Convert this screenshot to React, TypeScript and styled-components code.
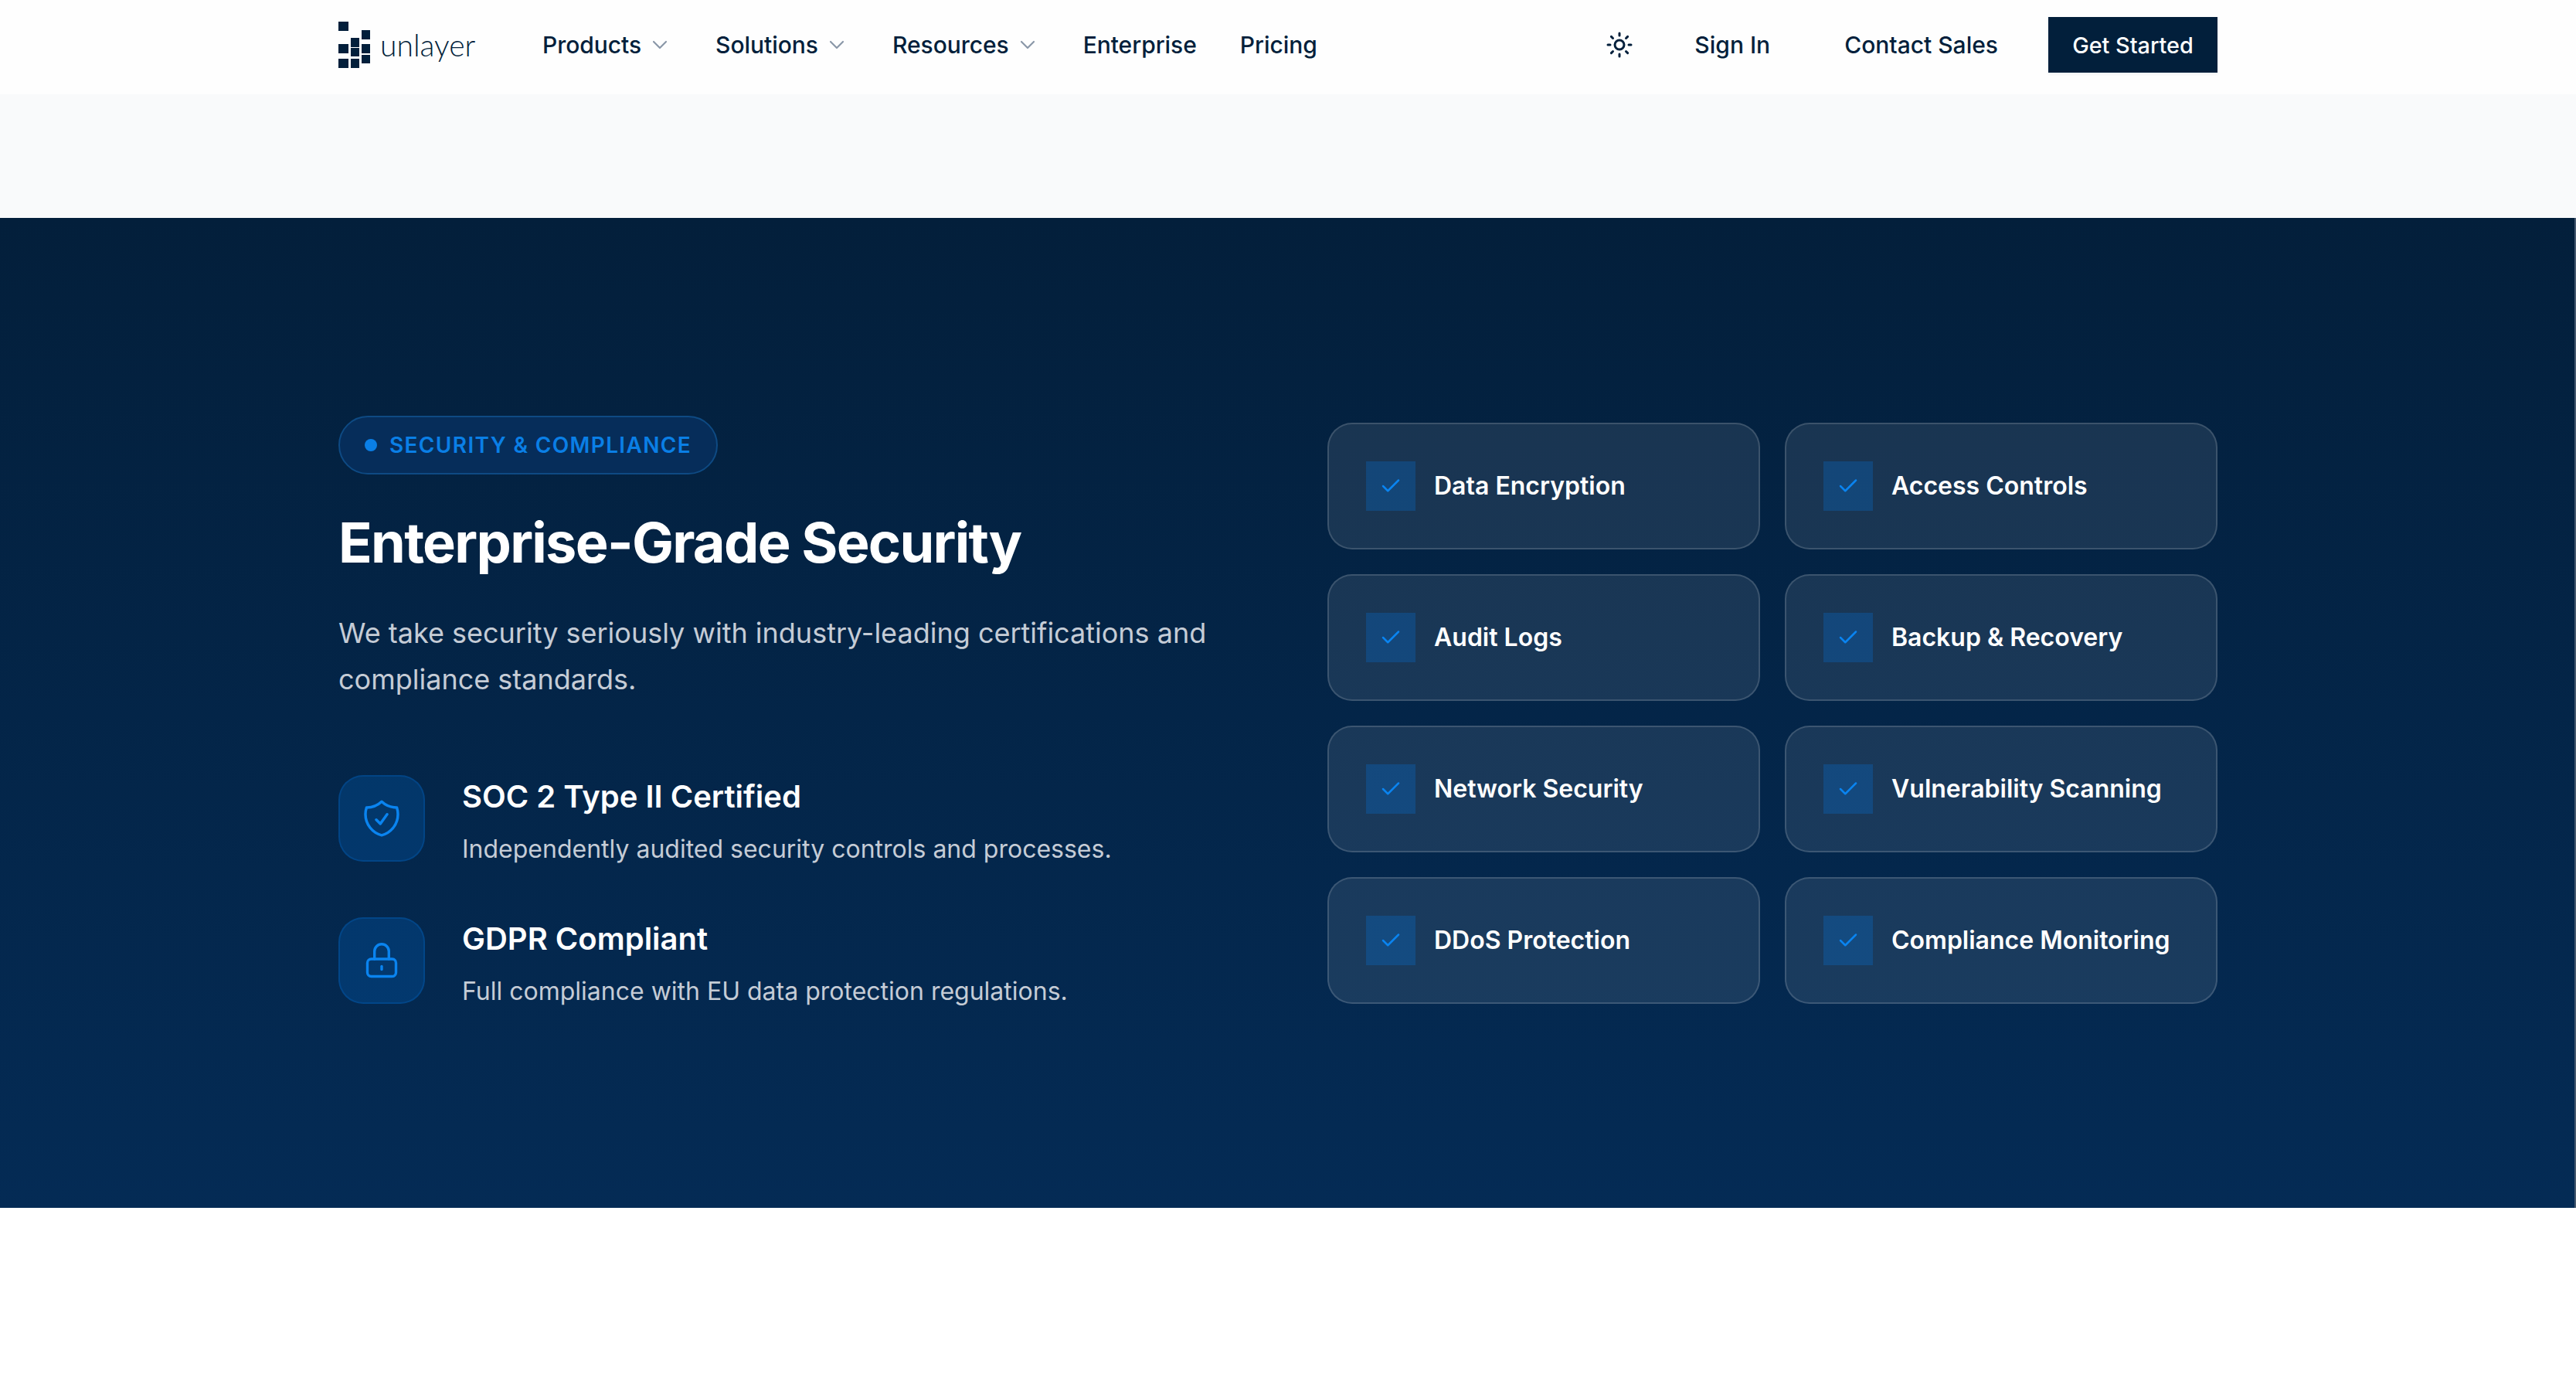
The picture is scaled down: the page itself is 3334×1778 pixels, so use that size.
import React from 'react';
import styled, { createGlobalStyle } from 'styled-components';
import { ChevronDown, Sun, Check } from 'lucide-react';

const navLinks = [
  { label: 'Products', menu: true },
  { label: 'Solutions', menu: true },
  { label: 'Resources', menu: true },
  { label: 'Enterprise', menu: false },
  { label: 'Pricing', menu: false },
];

const logoCells = [
  [0, 0, 13, 12],
  [30, 11, 11, 12],
  [16, 21, 11, 12],
  [0, 29, 13, 12],
  [30, 29, 11, 12],
  [16, 34, 11, 11],
  [30, 43, 11, 11],
  [0, 48, 13, 12],
  [16, 48, 11, 12],
];

const securityItems = [
  'Data Encryption',
  'Access Controls',
  'Audit Logs',
  'Backup & Recovery',
  'Network Security',
  'Vulnerability Scanning',
  'DDoS Protection',
  'Compliance Monitoring',
];

const GlobalStyle = createGlobalStyle`
  html, body {
    margin: 0;
    padding: 0;
    background: #ffffff;
  }
  body {
    font-family: 'Inter', 'Liberation Sans', sans-serif;
    color: #021f3b;
  }
  * {
    box-sizing: border-box;
  }
`;

const Page = styled.div`
  width: 3334px;
  height: 1778px;
  overflow: hidden;
  background: #ffffff;
`;

const Header = styled.header`
  height: 122px;
  padding: 22px 464px 28px 438px;
  background: #fefefe;
`;

const HeaderRow = styled.div`
  display: flex;
  align-items: center;
  height: 72px;
`;

const Logo = styled.a`
  display: flex;
  align-items: center;
  gap: 13px;
  width: 264px;
`;

const LogoWord = styled.span`
  font-family: 'Lato', sans-serif;
  font-weight: 300;
  font-size: 39px;
  line-height: 60px;
  color: #021f3b;
`;

const NavList = styled.nav`
  display: flex;
  align-items: center;
  gap: 56px;
  flex: 1;
`;

const NavLink = styled.a`
  display: flex;
  align-items: center;
  gap: 8px;
  font-size: 30px;
  font-weight: 500;
  line-height: 44px;
  letter-spacing: -0.04px;
  color: #021f3b;
  svg {
    color: #8a97a8;
  }
`;

const HeaderActions = styled.div`
  display: flex;
  align-items: center;
`;

const ThemeToggle = styled.button`
  display: flex;
  border: 0;
  padding: 0;
  background: none;
  color: #021f3b;
  margin-right: 79px;
`;

const ActionLink = styled.a`
  font-size: 30px;
  font-weight: 500;
  line-height: 44px;
  color: #021f3b;
  margin-right: ${({ $gap }: { $gap: number }) => $gap}px;
`;

const StartButton = styled.button`
  height: 72px;
  width: 219px;
  border: 0;
  background: #021f3b;
  color: #ffffff;
  font-family: inherit;
  font-size: 28.8px;
  font-weight: 500;
  box-shadow: 0 2px 4px rgba(2, 31, 59, 0.06);
`;

const Spacer = styled.div`
  height: 160px;
  background: #f9fafb;
`;

const SecuritySection = styled.section`
  height: 1281px;
  padding: 256px 462px 256px 438px;
  background: linear-gradient(180deg, #031f3b 0%, #042b55 100%);
  border-right: 2px solid #45586e;
`;

const SectionGrid = styled.div`
  display: flex;
  align-items: center;
  justify-content: space-between;
`;

const LeftColumn = styled.div`
  width: 1184px;
`;

const Badge = styled.div`
  display: inline-flex;
  align-items: center;
  gap: 16px;
  height: 76px;
  padding: 0 32px;
  border: 2px solid #0e4a83;
  border-radius: 38px;
  background: #062d5a;
  font-size: 28px;
  font-weight: 600;
  letter-spacing: 1.35px;
  color: #0a7fe6;
`;

const BadgeDot = styled.span`
  width: 16px;
  height: 16px;
  border-radius: 50%;
  background: #0a7fe6;
`;

const Title = styled.h2`
  margin: 48px 0 47px;
  font-size: 72px;
  line-height: 80px;
  font-weight: 700;
  letter-spacing: -1.7px;
  color: #ffffff;
`;

const Lead = styled.p`
  margin: 0 0 94px;
  font-size: 36px;
  line-height: 60px;
  color: #c5ccd6;
`;

const FeatureList = styled.div`
  display: flex;
  flex-direction: column;
  gap: 64px;
`;

const Feature = styled.div`
  display: flex;
  gap: 48px;
`;

const FeatureIcon = styled.div`
  display: flex;
  align-items: center;
  justify-content: center;
  width: 112px;
  height: 112px;
  border: 2px solid rgba(0, 132, 255, 0.18);
  border-radius: 32px;
  background: rgba(0, 132, 255, 0.18);
  color: #0a84f0;
`;

const FeatureTitle = styled.h3`
  margin: 0 0 16px;
  font-size: 40px;
  line-height: 56px;
  font-weight: 600;
  color: #ffffff;
`;

const FeatureText = styled.p`
  margin: 0;
  font-size: 32px;
  line-height: 48px;
  color: #c5ccd6;
`;

const CardGrid = styled.div`
  display: grid;
  grid-template-columns: 560px 560px;
  gap: 32px;
`;

const Card = styled.div`
  display: flex;
  align-items: center;
  gap: 24px;
  height: 164px;
  padding: 48px;
  border: 2px solid rgba(255, 255, 255, 0.15);
  border-radius: 32px;
  background: rgba(255, 255, 255, 0.09);
`;

const CheckBox = styled.div`
  display: flex;
  align-items: center;
  justify-content: center;
  width: 64px;
  height: 64px;
  background: rgba(0, 132, 255, 0.22);
  color: #0a84f0;
`;

const CardLabel = styled.span`
  font-size: 32px;
  font-weight: 600;
  color: #ffffff;
  white-space: nowrap;
`;

function LogoMark() {
  return (
    <svg width="41" height="60" viewBox="0 0 41 60" fill="#021f3b">
      {logoCells.map(([x, y, w, h]) => (
        <rect key={`${x}-${y}`} x={x} y={y} width={w} height={h} />
      ))}
    </svg>
  );
}

function ShieldIcon() {
  return (
    <svg width="56" height="56" viewBox="0 0 24 24" fill="none" stroke="currentColor" strokeWidth="1.5" strokeLinecap="round" strokeLinejoin="round">
      <path d="M9 12.75 11.25 15 15 9.75m-3-7.036A11.959 11.959 0 0 1 3.598 6 11.99 11.99 0 0 0 3 9.749c0 5.592 3.824 10.29 9 11.623 5.176-1.332 9-6.03 9-11.622 0-1.31-.21-2.571-.598-3.751h-.152c-3.196 0-6.1-1.248-8.25-3.286Z" />
    </svg>
  );
}

function LockIcon() {
  return (
    <svg width="56" height="56" viewBox="0 0 56 56" fill="none" stroke="currentColor" strokeWidth="3.4" strokeLinecap="round" strokeLinejoin="round">
      <rect x="9.5" y="26" width="37" height="22.5" rx="5" />
      <path d="M18.7 26V16a9.3 9.3 0 0 1 18.6 0v10" />
      <path d="M28 35.5v4" />
    </svg>
  );
}

export default function App() {
  return (
    <Page>
      <GlobalStyle />
      <Header>
        <HeaderRow>
          <Logo>
            <LogoMark />
            <LogoWord>unlayer</LogoWord>
          </Logo>
          <NavList>
            {navLinks.map((link) => (
              <NavLink key={link.label}>
                {link.label}
                {link.menu && <ChevronDown size={32} strokeWidth={1.6} />}
              </NavLink>
            ))}
          </NavList>
          <HeaderActions>
            <ThemeToggle>
              <Sun size={36} strokeWidth={2} />
            </ThemeToggle>
            <ActionLink $gap={96}>Sign In</ActionLink>
            <ActionLink $gap={65}>Contact Sales</ActionLink>
            <StartButton>Get Started</StartButton>
          </HeaderActions>
        </HeaderRow>
      </Header>
      <Spacer />
      <SecuritySection>
        <SectionGrid>
          <LeftColumn>
            <Badge>
              <BadgeDot />
              SECURITY &amp; COMPLIANCE
            </Badge>
            <Title>Enterprise-Grade Security</Title>
            <Lead>We take security seriously with industry-leading certifications and compliance standards.</Lead>
            <FeatureList>
              <Feature>
                <FeatureIcon>
                  <ShieldIcon />
                </FeatureIcon>
                <div>
                  <FeatureTitle>SOC 2 Type II Certified</FeatureTitle>
                  <FeatureText>Independently audited security controls and processes.</FeatureText>
                </div>
              </Feature>
              <Feature>
                <FeatureIcon>
                  <LockIcon />
                </FeatureIcon>
                <div>
                  <FeatureTitle>GDPR Compliant</FeatureTitle>
                  <FeatureText>Full compliance with EU data protection regulations.</FeatureText>
                </div>
              </Feature>
            </FeatureList>
          </LeftColumn>
          <CardGrid>
            {securityItems.map((item) => (
              <Card key={item}>
                <CheckBox>
                  <Check size={30} strokeWidth={2} />
                </CheckBox>
                <CardLabel>{item}</CardLabel>
              </Card>
            ))}
          </CardGrid>
        </SectionGrid>
      </SecuritySection>
    </Page>
  );
}
